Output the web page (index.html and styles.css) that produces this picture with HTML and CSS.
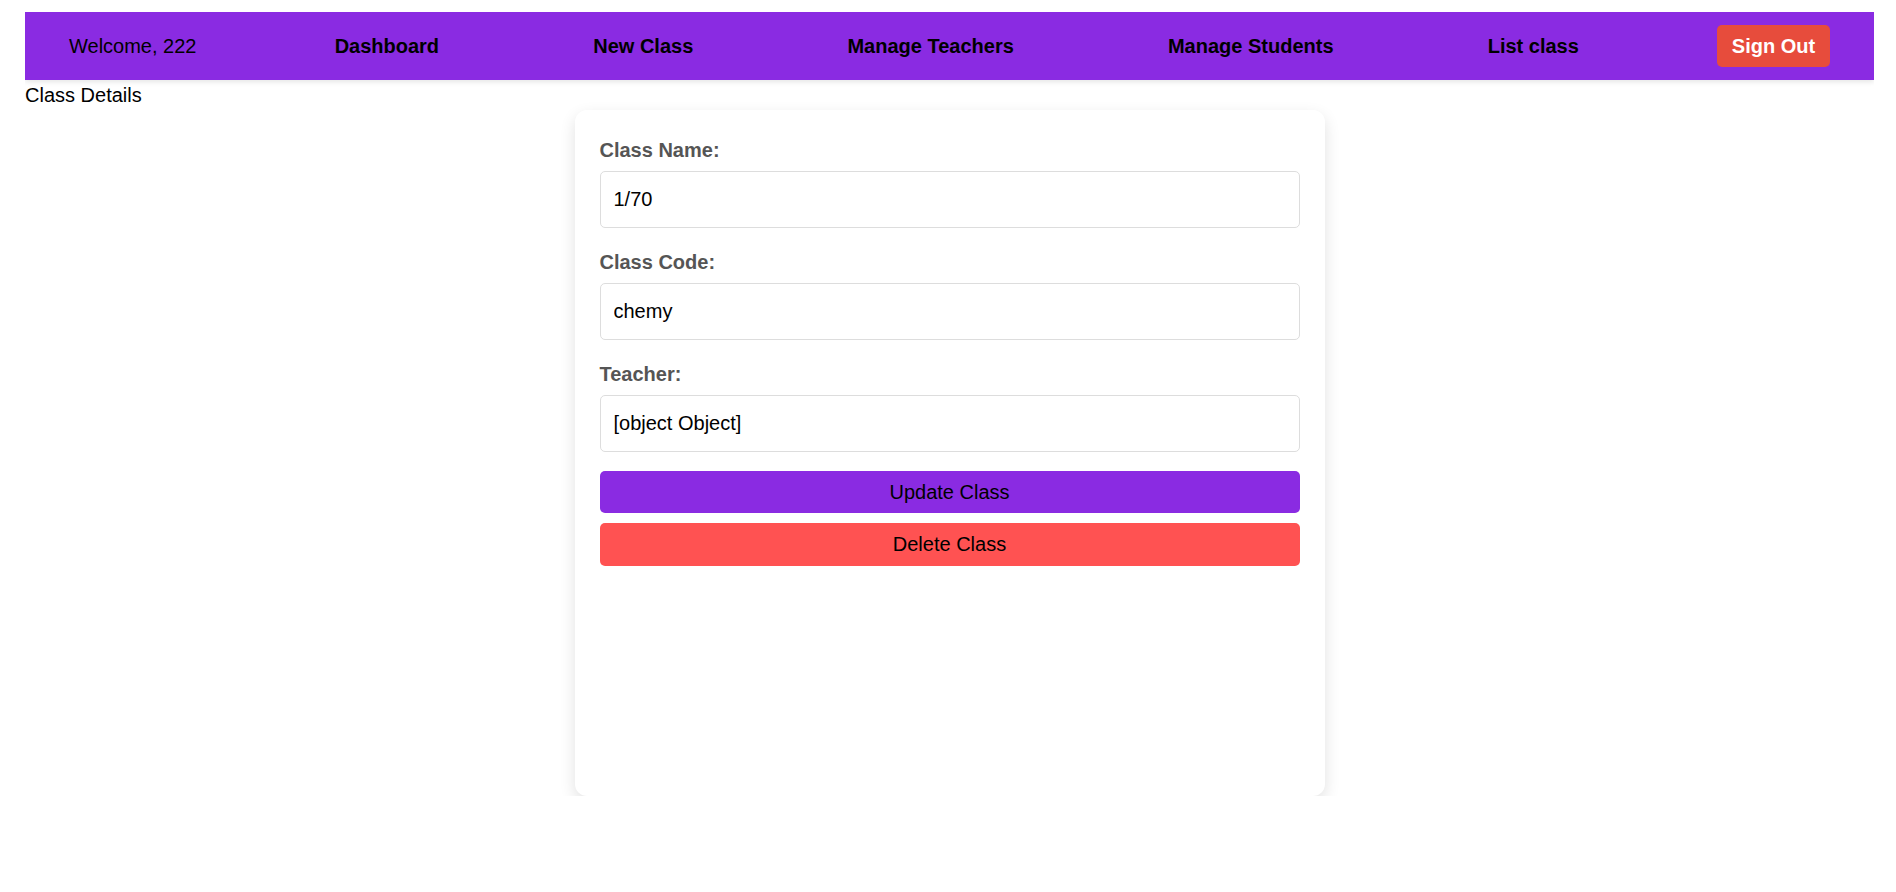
FILE: index.html
```html
<!DOCTYPE html>
<html>
<head>
<meta charset="utf-8">
<link rel="stylesheet" href="styles.css">
</head>
<body>
<nav class="navbar">
  <span class="welcome">Welcome, 222</span>
  <a class="nav-link" href="#">Dashboard</a>
  <a class="nav-link" href="#">New Class</a>
  <a class="nav-link" href="#">Manage Teachers</a>
  <a class="nav-link" href="#">Manage Students</a>
  <a class="nav-link" href="#">List class</a>
  <button class="signout">Sign Out</button>
</nav>
<div class="page-title">Class Details</div>
<div class="card">
  <div class="form-group">
    <label class="label">Class Name:</label>
    <input class="input" type="text" value="1/70">
  </div>
  <div class="form-group">
    <label class="label">Class Code:</label>
    <input class="input" type="text" value="chemy">
  </div>
  <div class="form-group last">
    <label class="label">Teacher:</label>
    <input class="input" type="text" value="[object Object]">
  </div>
  <button class="btn btn-update">Update Class</button>
  <button class="btn btn-delete">Delete Class</button>
</div>
</body>
</html>
```

FILE: styles.css
```css
html, body {
  background: #ffffff;
}
body {
  margin: 12px 22px 0 25px;
  font-family: "Liberation Sans", Arial, sans-serif;
  font-size: 20px;
  color: #000;
}
.navbar {
  display: flex;
  align-items: center;
  justify-content: space-between;
  height: 68px;
  padding: 0 44px;
  background: #8a2be2;
  box-shadow: 0 2px 5px rgba(0, 0, 0, 0.1);
  box-sizing: border-box;
}
.welcome {
  color: #000;
  font-size: 20px;
}
.nav-link {
  color: #000;
  font-weight: bold;
  font-size: 20px;
  text-decoration: none;
  padding: 0 16px;
}
.signout {
  font-family: "Liberation Sans", Arial, sans-serif;
  font-size: 20px;
  font-weight: bold;
  color: #fff;
  background: #e74c3c;
  border: none;
  border-radius: 5px;
  width: 113px;
  height: 42px;
  padding: 0;
}
.page-title {
  margin-top: 4px;
  line-height: 23px;
}
.card {
  box-sizing: border-box;
  width: 750px;
  min-height: 686px;
  margin: 3px auto 0;
  padding: 29px 25px 25px;
  background: #fff;
  border-radius: 12px;
  box-shadow: 0 6px 16px rgba(0, 0, 0, 0.12);
}
.form-group {
  margin-bottom: 23px;
}
.form-group.last {
  margin-bottom: 19px;
}
.label {
  display: block;
  font-weight: bold;
  color: #555;
  line-height: 23px;
  margin-bottom: 9px;
}
.input {
  display: block;
  box-sizing: border-box;
  width: 100%;
  height: 57px;
  padding: 0 13px;
  font-family: "Liberation Sans", Arial, sans-serif;
  font-size: 20px;
  color: #000;
  border: 1px solid #ddd;
  border-radius: 5px;
  background: #fff;
  outline: none;
}
.btn {
  display: block;
  width: 100%;
  height: 42px;
  border: none;
  border-radius: 5px;
  font-family: "Liberation Sans", Arial, sans-serif;
  font-size: 20px;
  color: #000;
  padding: 0;
}
.btn-update {
  background: #8a2be2;
  margin-bottom: 10px;
}
.btn-delete {
  background: #ff5252;
  height: 43px;
}
```
